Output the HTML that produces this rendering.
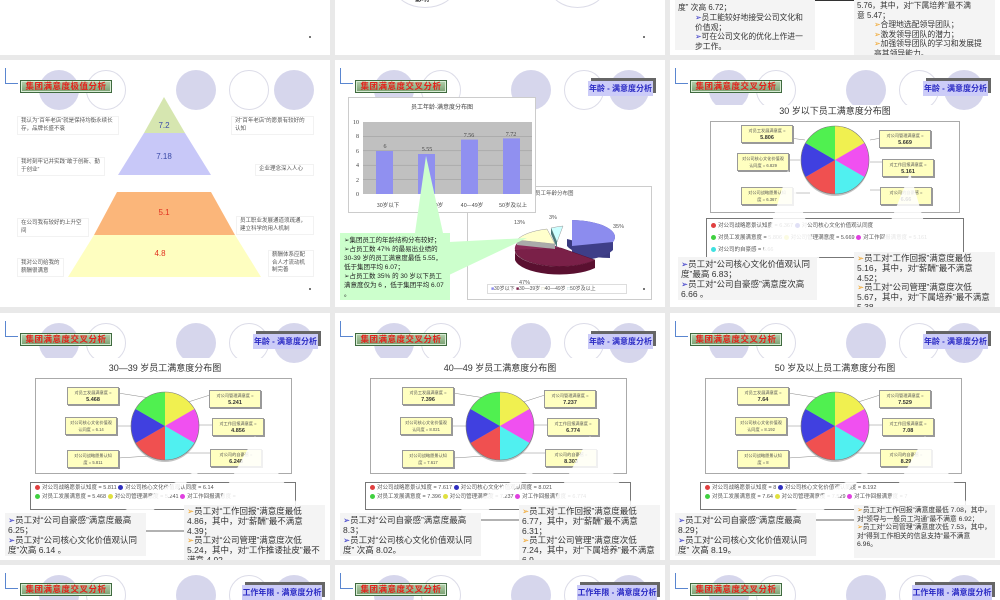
<!DOCTYPE html>
<html><head><meta charset="utf-8"><style>
*{margin:0;padding:0;box-sizing:border-box}
html,body{width:1000px;height:600px;overflow:hidden}
body{background:#e9e9e9;position:relative;font-family:"Liberation Sans","Noto Sans CJK SC",sans-serif;color:#333}
.s{position:absolute;width:330px;height:247px;background:#fff;overflow:hidden}
.a{position:absolute}
.br{position:absolute;left:5px;top:8px;width:13px;height:16px;border-left:1.5px solid #5a86d0;border-bottom:1.5px solid #5a86d0}
.c{position:absolute;width:40px;height:40px;border-radius:50%;top:11px}
.cf{background:#d6d6ec}.co{border:1px solid #dcdce8;background:#fff}
.tt{position:absolute;left:20px;top:20px;width:92px;height:13px;background:linear-gradient(#b4d0ac,#7aa072);border:1px solid #3f6a3f;box-shadow:inset 0 0 0 1px #d8ecd4;color:#e4201a;font-weight:bold;font-size:8.5px;line-height:11px;text-align:center;letter-spacing:.5px}
.tg{position:absolute;top:21px;height:15px;background:#ccccf8;box-shadow:3px -3px 0 #666;color:#2a2ac4;font-weight:bold;font-size:8px;line-height:15px;text-align:center}
.cv{position:absolute;left:0;top:45px;width:272px;height:30px;background:#fff}
.tx{position:absolute;font-size:5.5px;line-height:7.5px;color:#555;background:#fff;border:1px solid #f2f2f2;padding:1px 3px}
.ct{position:absolute;left:0;width:330px;text-align:center;font-size:9px;color:#333}
.cb{position:absolute;left:35px;top:65px;width:257px;height:96px;border:1px solid #aaa;background:#fff}
.lb{position:absolute;width:52px;height:18px;background:#ffffc0;border:1px solid #999;box-shadow:1px 1px 0 #999;font-size:4.2px;line-height:7px;text-align:center;color:#555;padding-top:1px;overflow:hidden;white-space:nowrap}
.lb b{font-size:5.5px;color:#333}
.lg{position:absolute;left:30px;top:169px;width:266px;height:28px;border:1px solid #777;background:#fff;font-size:5.5px;line-height:9px;padding:1px 4px;color:#555;white-space:nowrap;overflow:hidden}
.d{display:inline-block;width:5px;height:5px;border-radius:50%;margin-right:2px;vertical-align:-0.5px}
.bx{position:absolute;background:#f4f4f4;font-size:8.5px;line-height:10px;color:#333;padding:2px 3px;overflow:hidden}
.ar{color:#2a2ac4}.ay{color:#f0a020}
.dot{position:absolute;width:2px;height:2px;background:#777}
.nw{white-space:nowrap}
</style></head><body>

<!-- Row 1 -->
<div class="s" style="left:0;top:-192px"><div class="dot" style="left:309px;top:228px"></div></div>
<div class="s" style="left:335px;top:-192px">
<div class="c co" style="left:60px;top:160px;width:60px;height:40px"></div>
<div class="c co" style="left:215px;top:160px;width:55px;height:40px"></div>
<div class="a" style="left:80px;top:186px;font-size:7px;font-weight:bold;color:#333">影响</div>
<div class="dot" style="left:308px;top:228px"></div></div>
<div class="s" style="left:670px;top:-192px">
<div class="bx nw" style="left:5px;top:150px;width:140px;height:92px;padding-top:45px;font-size:7.8px;line-height:9.8px">度” 次高 6.72；<br><span style="padding-left:17px"><span class="ar">➢</span>员工能较好地接受公司文化和</span><br><span style="padding-left:17px">价值观；</span><br><span style="padding-left:17px"><span class="ar">➢</span>可在公司文化的优化上作进一</span><br><span style="padding-left:17px">步工作。</span></div>
<div class="a" style="left:145px;top:192px;width:39px;height:1px;background:#333"></div>
<div class="bx nw" style="left:184px;top:150px;width:141px;height:97px;padding-top:43px;line-height:9.6px;font-size:7.8px">5.76，其中，对“下属培养”最不满<br>意 5.47；<br><span style="padding-left:17px"><span class="ay">➢</span>合理地选配领导团队；</span><br><span style="padding-left:17px"><span class="ay">➢</span>激发领导团队的潜力；</span><br><span style="padding-left:17px"><span class="ay">➢</span>加强领导团队的学习和发展提</span><br><span style="padding-left:17px">高其领导能力。</span></div>
</div>

<!-- Row 2 col 1 pyramid -->
<div class="s" style="left:0;top:60px">
<div class="br"></div>
<div class="c cf" style="left:39px;top:10px"></div><div class="c co" style="left:86px;top:10px"></div>
<div class="c cf" style="left:176px;top:10px"></div><div class="c co" style="left:229px;top:10px"></div><div class="c cf" style="left:274px;top:10px"></div>
<div class="tt">集团满意度极值分析</div>
<svg class="a" style="left:0;top:0" width="330" height="247">
<polygon points="164,37 144,73 185,73" fill="#d6e6b0"/>
<polygon points="144,73 185,73 211,115 118,115" fill="#c8c8f8"/>
<polygon points="117,132 211,132 235,175 94,175" fill="#fbb67a"/>
<polygon points="94,175 235,175 261,217 68,217" fill="#fefec0"/>
<text x="164" y="68" font-size="8" fill="#3a4aa8" text-anchor="middle" font-family="Liberation Sans">7.2</text>
<text x="164" y="99" font-size="8" fill="#3a4aa8" text-anchor="middle" font-family="Liberation Sans">7.18</text>
<text x="164" y="155" font-size="8" fill="#e03020" text-anchor="middle" font-family="Liberation Sans">5.1</text>
<text x="160" y="196" font-size="8" fill="#e03020" text-anchor="middle" font-family="Liberation Sans">4.8</text>
</svg>
<div class="tx" style="left:17px;top:56px;width:102px">我认为“百年老店”就是保持均衡永续长存，品牌长盛不衰</div>
<div class="tx" style="left:17px;top:97px;width:88px">我时刻牢记并实践“敢于创新、勤于创业”</div>
<div class="tx" style="left:17px;top:158px;width:72px">在公司我有较好的上升空间</div>
<div class="tx" style="left:17px;top:198px;width:47px">我对公司给我的薪酬很满意</div>
<div class="tx" style="left:231px;top:56px;width:83px">对“百年老店”的愿景有较好的认知</div>
<div class="tx" style="left:255px;top:104px;width:59px">企业理念深入人心</div>
<div class="tx" style="left:236px;top:156px;width:78px">员工职业发展通道须疏通，建立科学的用人机制</div>
<div class="tx" style="left:268px;top:190px;width:46px">薪酬体系应配合人才流动机制完善</div>
<div class="dot" style="left:309px;top:228px"></div>
</div>

<!-- Row 2 col 2 bar chart -->
<div class="s" style="left:335px;top:60px">
<div class="br"></div>
<div class="c cf" style="left:39px;top:10px"></div><div class="c co" style="left:86px;top:10px"></div>
<div class="c cf" style="left:176px;top:10px"></div><div class="c co" style="left:229px;top:10px"></div><div class="c cf" style="left:274px;top:10px"></div>
<div class="tt">集团满意度交叉分析</div>
<div class="tg" style="left:253px;width:65px">年龄 - 满意度分析</div>
<div class="a" style="left:132px;top:126px;width:185px;height:114px;border:1px solid #ccc;background:#fff"></div>
<div class="a" style="left:200px;top:129px;font-size:5.5px;color:#555">员工年龄分布图</div>
<svg class="a" style="left:132px;top:126px" width="185" height="114">
<path d="M100,53 L100,60 A45,17 0 0 0 143,72 L143,64 Z" fill="#3a3a80"/>
<path d="M105,34 A45,17 0 0 1 146,56 L146,64 A45,17 0 0 1 105,75 Z" fill="#3e3e88"/>
<path d="M105,34 A45,17 0 0 1 146,56 L105,60 Z" fill="#8c8cee"/>
<path d="M48,66 A45,17 0 0 0 128,74 L128,82 A45,17 0 0 1 48,74 Z" fill="#5a1030"/>
<path d="M94,62 L48,64 A45,17 0 0 0 128,74 Z" fill="#7a2048" stroke="#5a1030" stroke-width=".5"/>
<path d="M94,62 L48,64 A45,17 0 0 1 62,50 Z" fill="#8a2a58"/>
<path d="M88,58 L50,54 A45,17 0 0 1 80,43 Z" fill="#ffffcc" stroke="#999" stroke-width=".5"/>
<path d="M50,54 L50,59 L88,63 L88,58Z" fill="#aaa"/>
<path d="M90,56 L84,42 A45,17 0 0 1 96,40 Z" fill="#ccffff" stroke="#999" stroke-width=".5"/>
<path d="M90,56 L90,62 L84,48 L84,42Z" fill="#4a7a7a"/>
<text x="52" y="98" font-size="5.5" fill="#555">47%</text>
<text x="47" y="38" font-size="5.5" fill="#555">13%</text>
<text x="82" y="33" font-size="5.5" fill="#555">3%</text>
<text x="146" y="42" font-size="5.5" fill="#555">35%</text>
</svg>
<div class="a" style="left:152px;top:224px;width:140px;height:10px;border:1px solid #ddd;font-size:5px;line-height:8px;color:#555;padding-left:3px;white-space:nowrap"><span style="color:#8c8cee">■</span>30岁以下 <span style="color:#7a2048">■</span>30—39岁 <span style="color:#cc9">□</span>40—49岁 <span style="color:#9cc">□</span>50岁及以上</div>
<div class="dot" style="left:308px;top:228px"></div>
<div class="a" style="left:13px;top:37px;width:188px;height:116px;border:1px solid #ccc;background:#fff"></div>
<svg class="a" style="left:13px;top:37px" width="188" height="116" font-family="Liberation Serif">
<text x="94" y="12" font-size="6" fill="#444" text-anchor="middle" font-family="Noto Sans CJK SC">员工年龄-满意度分布图</text>
<rect x="15" y="25" width="169" height="72" fill="#c0c0c0"/>
<g stroke="#999" stroke-width=".5"><line x1="15" y1="39.4" x2="184" y2="39.4"/><line x1="15" y1="53.8" x2="184" y2="53.8"/><line x1="15" y1="68.2" x2="184" y2="68.2"/><line x1="15" y1="82.6" x2="184" y2="82.6"/></g>
<g font-size="6" fill="#444" text-anchor="end"><text x="11" y="27">10</text><text x="11" y="41">8</text><text x="11" y="56">6</text><text x="11" y="70">4</text><text x="11" y="85">2</text><text x="11" y="99">0</text></g>
<g fill="#9090f0"><rect x="28" y="54" width="17" height="43"/><rect x="70" y="57" width="17" height="40"/><rect x="113" y="42.6" width="17" height="54.4"/><rect x="155" y="41.4" width="17" height="55.6"/></g>
<g font-size="6" fill="#444" text-anchor="middle"><text x="37" y="51">6</text><text x="79" y="54">5.55</text><text x="121" y="40">7.56</text><text x="163" y="39">7.72</text>
<text x="40" y="110" font-family="Noto Sans CJK SC" font-size="5.5">30岁以下</text><text x="84" y="110" font-family="Noto Sans CJK SC" font-size="5.5">30—39岁</text><text x="124" y="110" font-family="Noto Sans CJK SC" font-size="5.5">40—49岁</text><text x="165" y="110" font-family="Noto Sans CJK SC" font-size="5.5">50岁及以上</text></g>
</svg>
<svg class="a" style="left:0;top:0" width="330" height="247"><polygon points="80,173 91,96 108,173" fill="#ccffcc"/><polygon points="114,182 192,178 114,215" fill="#ccffcc"/></svg>
<div class="a" style="left:5px;top:173px;width:110px;height:67px;background:#ccffcc;font-size:6.5px;line-height:9px;padding:3px 4px;color:#222;overflow:hidden">➢集团员工的年龄结构分布较好；<br>➢占员工数 47% 的最易出业绩的 30-39 岁的员工满意度最低 5.55，低于集团平均 6.07；<br>➢占员工数 35% 的 30 岁以下员工满意度仅为 6 ，低于集团平均 6.07 。</div>
</div>

<svg width="0" height="0" style="position:absolute"><defs>
<g id="pie">
<circle cx="0" cy="2" r="34" fill="#888" opacity=".5"/>
<path d="M0,0 L0,-34 A34,34 0 0 1 29.4,-17Z" fill="#f0f050"/>
<path d="M0,0 L29.4,-17 A34,34 0 0 1 29.4,17Z" fill="#f050f0"/>
<path d="M0,0 L29.4,17 A34,34 0 0 1 0,34Z" fill="#50f0f0"/>
<path d="M0,0 L0,34 A34,34 0 0 1 -29.4,17Z" fill="#f05050"/>
<path d="M0,0 L-29.4,17 A34,34 0 0 1 -29.4,-17Z" fill="#4040e0"/>
<path d="M0,0 L-29.4,-17 A34,34 0 0 1 0,-34Z" fill="#50f050"/>
<circle r="34" fill="none" stroke="#777" stroke-width=".6"/>
</g></defs></svg>

<!-- A: row2 col3 -->
<div class="s" style="left:670px;top:60px">
<div class="br"></div>
<div class="c cf" style="left:39px;top:10px"></div><div class="c co" style="left:86px;top:10px"></div>
<div class="c cf" style="left:176px;top:10px"></div><div class="c co" style="left:229px;top:10px"></div><div class="c cf" style="left:274px;top:10px"></div>
<div class="cv"></div>
<div class="tt">集团满意度交叉分析</div>
<div class="tg" style="left:253px;width:65px">年龄 - 满意度分析</div>
<div class="ct" style="top:44px">30 岁以下员工满意度分布图</div>
<div class="cb" style="top:61px;left:40px;width:250px;height:92px"></div>
<svg class="a" style="left:0;top:0" width="330" height="247"><g stroke="#888" stroke-width=".5"><line x1="90" y1="74" x2="135" y2="80"/><line x1="90" y1="100" x2="130" y2="100"/><line x1="95" y1="133" x2="140" y2="133"/><line x1="200" y1="80" x2="240" y2="73"/><line x1="200" y1="102" x2="245" y2="102"/><line x1="200" y1="130" x2="235" y2="130"/></g><use href="#pie" x="165" y="100"/></svg>
<div class="lb" style="left:71px;top:65px">对员工发展满意度 =<br><b>5.806</b></div>
<div class="lb" style="left:67px;top:93px">对公司核心文化价值观<br>认同度 = 6.829</div>
<div class="lb" style="left:71px;top:127px">对公司战略愿景认知<br>度 = 6.367</div>
<div class="lb" style="left:209px;top:70px">对公司管理满意度 =<br><b>5.669</b></div>
<div class="lb" style="left:212px;top:99px">对工作回报满意度 =<br><b>5.161</b></div>
<div class="lb" style="left:210px;top:127px">对公司的自豪感 =<br><b>6.66</b></div>
<div class="lg" style="top:158px;left:36px;width:258px;height:40px;line-height:12px"><span class="d" style="background:#e04040"></span>对公司战略愿景认知度 = 6.367 <span class="d" style="background:#3030c0"></span>对公司核心文化价值观认同度<br><span class="d" style="background:#40d040"></span>对员工发展满意度 = 5.806 <span class="d" style="background:#e0e040"></span>对公司管理满意度 = 5.669 <span class="d" style="background:#e040e0"></span>对工作回报满意度 = 5.161<br><span class="d" style="background:#40e0e0"></span>对公司的自豪感 = 6.66</div>
<svg class="a" style="left:0;top:0" width="330" height="247"><polygon points="118,110 90,200 150,200" fill="#fff" opacity=".85"/><polygon points="240,113 205,200 265,200" fill="#fff" opacity=".85"/></svg>
<div class="bx" style="left:8px;top:197px;width:139px;height:43px"><span class="ar">➢</span>员工对“公司核心文化价值观认同度”最高 6.83；<br><span class="ar">➢</span>员工对“公司自豪感”满意度次高 6.66 。</div>
<div class="bx" style="left:184px;top:192px;width:141px;height:55px;line-height:9.8px"><span class="ay">➢</span>员工对“工作回报”满意度最低 5.16，其中，对“薪酬”最不满意 4.52；<br><span class="ay">➢</span>员工对“公司管理”满意度次低 5.67，其中，对“下属培养”最不满意 5.38。</div>
</div>

<!-- Row 3 -->
<div class="s" style="left:0;top:313px">
<div class="br"></div>
<div class="c cf" style="left:39px;top:10px"></div><div class="c co" style="left:86px;top:10px"></div>
<div class="c cf" style="left:176px;top:10px"></div><div class="c co" style="left:229px;top:10px"></div><div class="c cf" style="left:274px;top:10px"></div>
<div class="cv"></div>
<div class="tt">集团满意度交叉分析</div>
<div class="tg" style="left:253px;width:65px">年龄 - 满意度分析</div>
<div class="ct" style="top:48px">30—39 岁员工满意度分布图</div>
<div class="cb"></div>
<svg class="a" style="left:0;top:0" width="330" height="247"><g stroke="#888" stroke-width=".5"><line x1="118" y1="80" x2="150" y2="85"/><line x1="115" y1="113" x2="132" y2="113"/><line x1="118" y1="145" x2="150" y2="143"/><line x1="185" y1="90" x2="210" y2="82"/><line x1="195" y1="112" x2="212" y2="112"/><line x1="180" y1="140" x2="210" y2="140"/></g><use href="#pie" x="165" y="113"/></svg>
<div class="lb" style="left:67px;top:74px">对员工发展满意度 =<br><b>5.468</b></div>
<div class="lb" style="left:65px;top:104px">对公司核心文化价值观<br>认同度 = 6.14</div>
<div class="lb" style="left:67px;top:137px">对公司战略愿景认知<br>度 = 5.811</div>
<div class="lb" style="left:209px;top:77px">对公司管理满意度 =<br><b>5.241</b></div>
<div class="lb" style="left:212px;top:105px">对工作回报满意度 =<br><b>4.856</b></div>
<div class="lb" style="left:210px;top:136px">对公司的自豪感 =<br><b>6.248</b></div>
<div class="lg"><span class="d" style="background:#e04040"></span>对公司战略愿景认知度 = 5.811 <span class="d" style="background:#3030c0"></span>对公司核心文化价值观认同度 = 6.14<br><span class="d" style="background:#40d040"></span>对员工发展满意度 = 5.468 <span class="d" style="background:#e0e040"></span>对公司管理满意度 = 5.241 <span class="d" style="background:#e040e0"></span>对工作回报满意度 =</div>
<svg class="a" style="left:0;top:0" width="330" height="247"><polygon points="210,150 120,200 150,200" fill="#fff" opacity=".85"/><polygon points="255,123 215,195 300,195" fill="#fff" opacity=".85"/><line x1="146" y1="218" x2="184" y2="218" stroke="#333" stroke-width=".7"/></svg>
<div class="bx" style="left:5px;top:200px;width:141px;height:43px"><span class="ar">➢</span>员工对“公司自豪感”满意度最高 6.25；<br><span class="ar">➢</span>员工对“公司核心文化价值观认同度”次高 6.14 。</div>
<div class="bx" style="left:184px;top:192px;width:141px;height:55px;line-height:9.8px"><span class="ay">➢</span>员工对“工作回报”满意度最低 4.86，其中，对“薪酬”最不满意 4.39；<br><span class="ay">➢</span>员工对“公司管理”满意度次低 5.24，其中，对“工作推诿扯皮”最不满意 4.92。</div>
</div>

<div class="s" style="left:335px;top:313px">
<div class="br"></div>
<div class="c cf" style="left:39px;top:10px"></div><div class="c co" style="left:86px;top:10px"></div>
<div class="c cf" style="left:176px;top:10px"></div><div class="c co" style="left:229px;top:10px"></div><div class="c cf" style="left:274px;top:10px"></div>
<div class="cv"></div>
<div class="tt">集团满意度交叉分析</div>
<div class="tg" style="left:253px;width:65px">年龄 - 满意度分析</div>
<div class="ct" style="top:48px">40—49 岁员工满意度分布图</div>
<div class="cb"></div>
<svg class="a" style="left:0;top:0" width="330" height="247"><g stroke="#888" stroke-width=".5"><line x1="118" y1="80" x2="150" y2="85"/><line x1="115" y1="113" x2="132" y2="113"/><line x1="118" y1="145" x2="150" y2="143"/><line x1="185" y1="90" x2="210" y2="82"/><line x1="195" y1="112" x2="212" y2="112"/><line x1="180" y1="140" x2="210" y2="140"/></g><use href="#pie" x="165" y="113"/></svg>
<div class="lb" style="left:67px;top:74px">对员工发展满意度 =<br><b>7.396</b></div>
<div class="lb" style="left:65px;top:104px">对公司核心文化价值观<br>认同度 = 8.021</div>
<div class="lb" style="left:67px;top:137px">对公司战略愿景认知<br>度 = 7.617</div>
<div class="lb" style="left:209px;top:77px">对公司管理满意度 =<br><b>7.237</b></div>
<div class="lb" style="left:212px;top:105px">对工作回报满意度 =<br><b>6.774</b></div>
<div class="lb" style="left:210px;top:136px">对公司的自豪感 =<br><b>8.303</b></div>
<div class="lg"><span class="d" style="background:#e04040"></span>对公司战略愿景认知度 = 7.617 <span class="d" style="background:#3030c0"></span>对公司核心文化价值观认同度 = 8.021<br><span class="d" style="background:#40d040"></span>对员工发展满意度 = 7.396 <span class="d" style="background:#e0e040"></span>对公司管理满意度 = 7.237 <span class="d" style="background:#e040e0"></span>对工作回报满意度 = 6.774</div>
<svg class="a" style="left:0;top:0" width="330" height="247"><polygon points="210,150 120,200 150,200" fill="#fff" opacity=".85"/><polygon points="255,123 215,195 300,195" fill="#fff" opacity=".85"/><line x1="146" y1="207" x2="184" y2="207" stroke="#333" stroke-width=".7"/></svg>
<div class="bx" style="left:5px;top:200px;width:141px;height:43px"><span class="ar">➢</span>员工对“公司自豪感”满意度最高 8.3；<br><span class="ar">➢</span>员工对“公司核心文化价值观认同度” 次高 8.02。</div>
<div class="bx" style="left:184px;top:192px;width:141px;height:55px;line-height:9.8px"><span class="ay">➢</span>员工对“工作回报”满意度最低 6.77，其中，对“薪酬”最不满意 6.31；<br><span class="ay">➢</span>员工对“公司管理”满意度次低 7.24，其中，对“下属培养”最不满意 6.9。</div>
</div>

<div class="s" style="left:670px;top:313px">
<div class="br"></div>
<div class="c cf" style="left:39px;top:10px"></div><div class="c co" style="left:86px;top:10px"></div>
<div class="c cf" style="left:176px;top:10px"></div><div class="c co" style="left:229px;top:10px"></div><div class="c cf" style="left:274px;top:10px"></div>
<div class="cv"></div>
<div class="tt">集团满意度交叉分析</div>
<div class="tg" style="left:253px;width:65px">年龄 - 满意度分析</div>
<div class="ct" style="top:48px">50 岁及以上员工满意度分布图</div>
<div class="cb"></div>
<svg class="a" style="left:0;top:0" width="330" height="247"><g stroke="#888" stroke-width=".5"><line x1="118" y1="80" x2="150" y2="85"/><line x1="115" y1="113" x2="132" y2="113"/><line x1="118" y1="145" x2="150" y2="143"/><line x1="185" y1="90" x2="210" y2="82"/><line x1="195" y1="112" x2="212" y2="112"/><line x1="180" y1="140" x2="210" y2="140"/></g><use href="#pie" x="165" y="113"/></svg>
<div class="lb" style="left:67px;top:74px">对员工发展满意度 =<br><b>7.64</b></div>
<div class="lb" style="left:65px;top:104px">对公司核心文化价值观<br>认同度 = 8.192</div>
<div class="lb" style="left:67px;top:137px">对公司战略愿景认知<br>度 = 8</div>
<div class="lb" style="left:209px;top:77px">对公司管理满意度 =<br><b>7.529</b></div>
<div class="lb" style="left:212px;top:105px">对工作回报满意度 =<br><b>7.08</b></div>
<div class="lb" style="left:210px;top:136px">对公司的自豪感 =<br><b>8.29</b></div>
<div class="lg"><span class="d" style="background:#e04040"></span>对公司战略愿景认知度 = 8 <span class="d" style="background:#3030c0"></span>对公司核心文化价值观认同度 = 8.192<br><span class="d" style="background:#40d040"></span>对员工发展满意度 = 7.64 <span class="d" style="background:#e0e040"></span>对公司管理满意度 = 7.529 <span class="d" style="background:#e040e0"></span>对工作回报满意度 = 7</div>
<svg class="a" style="left:0;top:0" width="330" height="247"><polygon points="210,150 120,200 150,200" fill="#fff" opacity=".85"/><polygon points="255,123 215,195 300,195" fill="#fff" opacity=".85"/><line x1="146" y1="207" x2="184" y2="207" stroke="#333" stroke-width=".7"/></svg>
<div class="bx" style="left:5px;top:200px;width:141px;height:43px"><span class="ar">➢</span>员工对“公司自豪感”满意度最高 8.29；<br><span class="ar">➢</span>员工对“公司核心文化价值观认同度” 次高 8.19。</div>
<div class="bx" style="left:184px;top:192px;width:141px;height:53px;font-size:6.8px;line-height:8.6px"><span class="ay">➢</span>员工对“工作回报”满意度最低 7.08，其中，对“领导与一般员工沟通”最不满意 6.92；<br><span class="ay">➢</span>员工对“公司管理”满意度次低 7.53，其中，对“得到工作相关的信息支持”最不满意 6.96。</div>
</div>

<!-- Row 4 -->
<div class="s" style="left:0;top:565px;height:35px">
<div class="br"></div>
<div class="c cf" style="left:39px;top:10px"></div><div class="c co" style="left:86px;top:10px"></div>
<div class="c cf" style="left:176px;top:10px"></div><div class="c co" style="left:229px;top:10px"></div><div class="c cf" style="left:274px;top:10px"></div>
<div class="tt" style="top:18px">集团满意度交叉分析</div>
<div class="tg" style="left:242px;width:80px;top:20px">工作年限 - 满意度分析</div>
</div>
<div class="s" style="left:335px;top:565px;height:35px">
<div class="br"></div>
<div class="c cf" style="left:39px;top:10px"></div><div class="c co" style="left:86px;top:10px"></div>
<div class="c cf" style="left:176px;top:10px"></div><div class="c co" style="left:229px;top:10px"></div><div class="c cf" style="left:274px;top:10px"></div>
<div class="tt" style="top:18px">集团满意度交叉分析</div>
<div class="tg" style="left:242px;width:80px;top:20px">工作年限 - 满意度分析</div>
</div>
<div class="s" style="left:670px;top:565px;height:35px">
<div class="br"></div>
<div class="c cf" style="left:39px;top:10px"></div><div class="c co" style="left:86px;top:10px"></div>
<div class="c cf" style="left:176px;top:10px"></div><div class="c co" style="left:229px;top:10px"></div><div class="c cf" style="left:274px;top:10px"></div>
<div class="tt" style="top:18px">集团满意度交叉分析</div>
<div class="tg" style="left:242px;width:80px;top:20px">工作年限 - 满意度分析</div>
</div>
</body></html>
